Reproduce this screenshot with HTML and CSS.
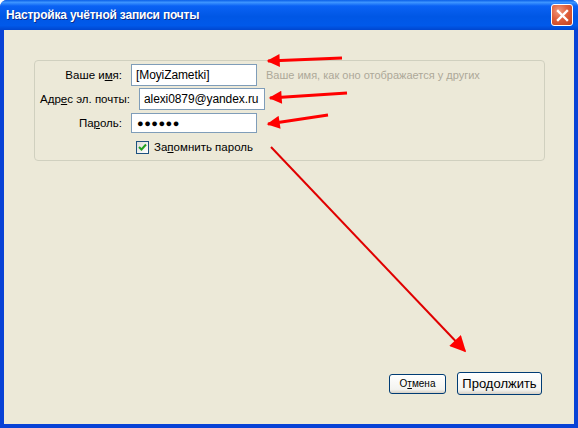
FILE: index.html
```html
<!DOCTYPE html>
<html lang="ru">
  <head>
    <meta charset="UTF-8" />
    <title>Настройка учётной записи почты</title>
    <link rel="stylesheet" href="styles.css">
  </head>
  <body>
    <div class="window">
      <div class="titlebar">
        <span class="title">Настройка учётной записи почты</span>
        <button class="close" title="Закрыть">
          <svg width="13" height="13" viewBox="0 0 13 13">
            <path d="M2 2 L11 11 M11 2 L2 11" stroke="#fff" stroke-width="2.4" stroke-linecap="square" />
          </svg>
        </button>
      </div>

      <div class="client">
        <div class="group">
          <div class="row">
            <label class="lbl">Ваше и<u>м</u>я:</label>
            <div class="field">[MoyiZametki]</div>
            <span class="hint">Ваше имя, как оно отображается у других</span>
          </div>
          <div class="row">
            <label class="lbl lbl-wide">Адр<u>е</u>с эл. почты:</label>
            <div class="field">alexi0879@yandex.ru</div>
          </div>
          <div class="row">
            <label class="lbl">Па<u>р</u>оль:</label>
            <div class="field pass">●●●●●●</div>
          </div>
          <div class="row row-check">
            <span class="checkbox">
              <svg width="9" height="9" viewBox="0 0 9 9">
                <path d="M1 4 L3.5 6.5 L8 1.5" fill="none" stroke="#21a121" stroke-width="2" />
              </svg>
            </span>
            <span>За<u>п</u>омнить пароль</span>
          </div>
        </div>

        <div class="buttons">
          <button class="btn btn-small">О<u>т</u>мена</button>
          <button class="btn">Продолжить</button>
        </div>
      </div>

      <!-- red hand-drawn pointers on top of the dialog -->
      <svg class="marks" width="578" height="428" viewBox="0 0 578 428">
        <defs>
          <marker id="head" viewBox="0 0 10 10" refX="9" refY="5" markerWidth="14" markerHeight="13" markerUnits="userSpaceOnUse" orient="auto">
            <path d="M0 0 L10 5 L0 10 z" fill="#ff0000" />
          </marker>
          <marker id="head2" viewBox="0 0 10 10" refX="9" refY="5" markerWidth="17" markerHeight="16" markerUnits="userSpaceOnUse" orient="auto">
            <path d="M0 0 L10 5 L0 10 z" fill="#ff0000" />
          </marker>
        </defs>
        <path d="M342 58 L268 61" stroke="#ff0000" stroke-width="3" fill="none" marker-end="url(#head)" />
        <path d="M347 93 L270 98" stroke="#ff0000" stroke-width="3" fill="none" marker-end="url(#head)" />
        <path d="M328 115 L268 124" stroke="#ff0000" stroke-width="3" fill="none" marker-end="url(#head)" />
        <path d="M271 147 L465 351" stroke="#e00000" stroke-width="2" fill="none" marker-end="url(#head2)" />
      </svg>
    </div>
  </body>
</html>
```

FILE: styles.css
```css
* {
  margin: 0;
  padding: 0;
  box-sizing: border-box;
}
body {
  width: 578px;
  height: 428px;
  overflow: hidden;
  font-family: "Liberation Sans", Arial, sans-serif;
  font-size: 11.5px;
  color: #000;
}
.window {
  position: relative;
  width: 578px;
  height: 428px;
  display: flex;
  flex-direction: column;
  background: #0842d6;
  border-radius: 7px 7px 0 0;
  overflow: hidden;
}
.titlebar {
  height: 30px;
  flex: none;
  display: flex;
  align-items: center;
  justify-content: space-between;
  padding: 0 5px 0 6px;
  background: linear-gradient(#0a5fe8 0%, #3d95ff 8%, #0a62f4 20%, #0057e5 55%, #0059ea 85%, #0046cf 100%);
}
.title {
  color: #fff;
  font-weight: bold;
  font-size: 12px;
  letter-spacing: -0.2px;
  text-shadow: 1px 1px 0 #0b2d8a;
}
.close {
  width: 22px;
  height: 22px;
  border: 1px solid #fff;
  border-radius: 3px;
  background: radial-gradient(circle at 35% 30%, #f19a7e 0%, #e0603c 45%, #c4401c 100%);
  display: flex;
  align-items: center;
  justify-content: center;
}
.client {
  flex: 1;
  margin: 0 4px 4px;
  background: #ece9d8;
  display: flex;
  flex-direction: column;
}
.group {
  margin: 30px 0 0 30px;
  width: 511px;
  height: 101px;
  border: 1px solid #d0d0bf;
  border-radius: 4px;
  padding: 2px 0 0 0;
}
.row {
  display: flex;
  align-items: center;
  height: 24px;
}
.lbl {
  width: 87px;
  text-align: right;
  margin-right: 9px;
}
.lbl-wide {
  width: 95px;
}
.field {
  width: 126px;
  height: 22px;
  border: 1px solid #7f9db9;
  background: #fff;
  font-size: 12px;
  padding: 0 4px;
  line-height: 20px;
  letter-spacing: -0.1px;
  white-space: nowrap;
  overflow: hidden;
}
.pass {
  height: 20px;
  font-size: 11px;
  letter-spacing: 0.5px;
  line-height: 18px;
  padding-left: 5px;
}
.hint {
  color: #aca899;
  font-size: 11px;
  margin-left: 9px;
}
.row-check {
  margin-top: 4px;
  padding-left: 101px;
  height: 16px;
}
.checkbox {
  width: 13px;
  height: 13px;
  border: 1px solid #1c5180;
  background: linear-gradient(135deg, #dcdcd7, #fff);
  display: flex;
  align-items: center;
  justify-content: center;
  margin-right: 5px;
}
.buttons {
  margin-top: auto;
  display: flex;
  justify-content: flex-end;
  align-items: center;
  gap: 11px;
  padding: 0 32px 29px 0;
}
.btn {
  height: 23px;
  width: 85px;
  padding: 0 4px;
  border: 1px solid #003c74;
  border-radius: 3px;
  background: linear-gradient(#fff, #f3f3ef 80%, #d6d0c5);
  font-family: "Liberation Sans", Arial, sans-serif;
  font-size: 13px;
  color: #000;
}
.btn-small {
  height: 20px;
  width: 57px;
  font-size: 10px;
}
.marks {
  position: absolute;
  left: 0;
  top: 0;
  pointer-events: none;
}
```
